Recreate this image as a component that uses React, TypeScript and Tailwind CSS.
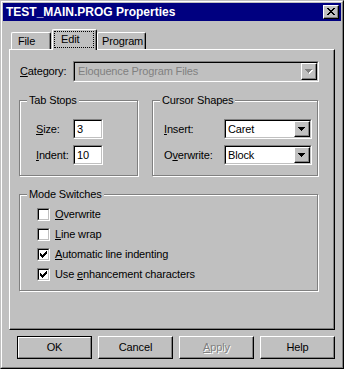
import React from "react";

const raised =
  "border-t border-l border-t-white border-l-white border-b border-r border-b-black border-r-black shadow-[inset_-1px_-1px_0_#808080]";

function Arrow({ disabled }: { disabled?: boolean }) {
  const fill = disabled ? "#808080" : "#000";
  return (
    <svg width="8" height="5" shapeRendering="crispEdges">
      {disabled && (
        <g fill="#fff">
          <rect x="1" y="1" width="7" height="1" />
          <rect x="2" y="2" width="5" height="1" />
          <rect x="3" y="3" width="3" height="1" />
          <rect x="4" y="4" width="1" height="1" />
        </g>
      )}
      <g fill={fill}>
        <rect x="0" y="0" width="7" height="1" />
        <rect x="1" y="1" width="5" height="1" />
        <rect x="2" y="2" width="3" height="1" />
        <rect x="3" y="3" width="1" height="1" />
      </g>
    </svg>
  );
}

function Sunken({ className, children, bg = "bg-white" }: { className: string; children?: React.ReactNode; bg?: string }) {
  return (
    <div className={`${className} border border-t-[#808080] border-l-[#808080] border-b-white border-r-white`}>
      <div className={`w-full h-full border border-t-black border-l-black border-b-[#c0c0c0] border-r-[#c0c0c0] ${bg} flex items-center`}>
        {children}
      </div>
    </div>
  );
}

function Combo({ className, value, disabled }: { className: string; value: string; disabled?: boolean }) {
  return (
    <Sunken className={className} bg={disabled ? "bg-[#c0c0c0]" : "bg-white"}>
      <span className={`flex-1 ${disabled ? "pl-[3px] text-[#808080]" : "pl-[2px]"}`}>{value}</span>
      <div className={`w-[16px] h-full bg-[#c0c0c0] flex items-center justify-center ${raised}`}>
        <Arrow disabled={disabled} />
      </div>
    </Sunken>
  );
}

function Check() {
  return (
    <svg width="7" height="7" shapeRendering="crispEdges" fill="#000">
      <rect x="6" y="0" width="1" height="1" />
      <rect x="5" y="1" width="2" height="1" />
      <rect x="0" y="2" width="1" height="1" />
      <rect x="4" y="2" width="3" height="1" />
      <rect x="0" y="3" width="2" height="1" />
      <rect x="3" y="3" width="3" height="1" />
      <rect x="0" y="4" width="5" height="1" />
      <rect x="1" y="5" width="3" height="1" />
      <rect x="2" y="6" width="1" height="1" />
    </svg>
  );
}

function CheckRow({ checked, children }: { checked?: boolean; children: React.ReactNode }) {
  return (
    <div className="h-[13px] flex items-center gap-[5px]">
      <div className="w-[13px] h-[13px] border border-t-[#808080] border-l-[#808080] border-b-white border-r-white">
        <div className="w-full h-full border border-t-black border-l-black border-b-[#c0c0c0] border-r-[#c0c0c0] bg-white pl-px pt-px">
          {checked && <Check />}
        </div>
      </div>
      <span>{children}</span>
    </div>
  );
}

function Group({ className, title, children }: { className: string; title: string; children?: React.ReactNode }) {
  return (
    <div className={`${className} relative border border-[#808080] shadow-[inset_1px_1px_0_#fff,1px_1px_0_#fff]`}>
      <span className="absolute top-[-7px] left-[7px] px-[2px] bg-[#c0c0c0]">{title}</span>
      {children}
    </div>
  );
}

function Button({ children, def, disabled }: { children: React.ReactNode; def?: boolean; disabled?: boolean }) {
  if (def) {
    return (
      <div className="w-[75px] h-[23px] border border-black">
        <div className="w-full h-full border-t border-l border-t-white border-l-white border-b border-r border-b-[#808080] border-r-[#808080] flex items-center justify-center">
          {children}
        </div>
      </div>
    );
  }
  return (
    <div className={`w-[75px] h-[23px] flex items-center justify-center ${raised} ${disabled ? "text-[#808080] [text-shadow:1px_1px_0_#fff]" : ""}`}>
      {children}
    </div>
  );
}

export default function App() {
  return (
    <div className="w-[344px] h-[369px] bg-[#c0c0c0] font-['Liberation_Sans',Arial,sans-serif] text-[11px] leading-[13px] tracking-[-0.15px] text-black border border-t-[#c0c0c0] border-l-[#c0c0c0] border-b-black border-r-black">
      <div className="h-full border border-t-white border-l-white border-b-[#808080] border-r-[#808080] p-px flex flex-col">
        {/* title bar */}
        <div className="h-[18px] bg-[#000080] flex items-center justify-between pl-[3px] pr-[2px]">
          <span className="text-white font-bold text-[12px] leading-[14px] tracking-normal">TEST_MAIN.PROG Properties</span>
          <div className={`w-[16px] h-[14px] bg-[#c0c0c0] pl-[3px] pt-[2px] ${raised}`}>
            <svg width="8" height="7" shapeRendering="crispEdges" fill="#000" className="block">
              <rect x="0" y="0" width="2" height="1" />
              <rect x="6" y="0" width="2" height="1" />
              <rect x="1" y="1" width="2" height="1" />
              <rect x="5" y="1" width="2" height="1" />
              <rect x="2" y="2" width="4" height="1" />
              <rect x="3" y="3" width="2" height="1" />
              <rect x="2" y="4" width="4" height="1" />
              <rect x="1" y="5" width="2" height="1" />
              <rect x="5" y="5" width="2" height="1" />
              <rect x="0" y="6" width="2" height="1" />
              <rect x="6" y="6" width="2" height="1" />
            </svg>
          </div>
        </div>

        {/* tabs */}
        <div className="mt-[8px] ml-[6px] pl-[2px] flex items-end h-[20px]">
          <div className="w-[40px] h-[17px] pl-[6px] pt-[2px] border-t border-l border-white border-r border-r-black rounded-tl-[2px] rounded-tr-[2px] shadow-[inset_-1px_0_0_#808080]">
            File
          </div>
          <div className="relative z-10 ml-[1px] mb-[-1px] w-[45px] h-[21px] bg-[#c0c0c0] border-t border-l border-white border-r border-r-black rounded-tl-[2px] rounded-tr-[2px] shadow-[inset_-1px_0_0_#808080]">
            <div className="ml-[1px] mt-[1px] w-[40px] h-[17px] border border-dotted border-black pl-[6px] pt-[1px]">Edit</div>
          </div>
          <div className="w-[49px] h-[17px] pl-[4px] pt-[2px] border-t border-l border-white border-r border-r-black rounded-tl-[2px] rounded-tr-[2px] shadow-[inset_-1px_0_0_#808080]">
            Program
          </div>
        </div>

        {/* panel */}
        <div className="ml-[6px] w-[326px] h-[281px] border-t border-l border-white border-b border-r border-b-black border-r-black shadow-[inset_-1px_-1px_0_#808080] pl-[9px] pt-[11px]">
          <div className="flex items-center h-[21px]">
            <span className="w-[54px] pl-[1px]">
              <u className="decoration-1">C</u>ategory:
            </span>
            <Combo className="w-[246px] h-[21px]" value="Eloquence Program Files" disabled />
          </div>

          <div className="mt-[18px] flex gap-[14px]">
            <Group className="w-[119px] h-[76px]" title="Tab Stops">
              <div className="pt-[18px] pl-[16px] flex flex-col gap-[6px]">
                <div className="flex items-center">
                  <span className="w-[37px]">
                    <u className="decoration-1">S</u>ize:
                  </span>
                  <Sunken className="w-[30px] h-[20px]">
                    <span className="pl-[2px]">3</span>
                  </Sunken>
                </div>
                <div className="flex items-center">
                  <span className="w-[37px]">
                    <u className="decoration-1">I</u>ndent:
                  </span>
                  <Sunken className="w-[30px] h-[20px]">
                    <span className="pl-[2px]">10</span>
                  </Sunken>
                </div>
              </div>
            </Group>
            <Group className="w-[166px] h-[76px]" title="Cursor Shapes">
              <div className="pt-[18px] pl-[11px] flex flex-col gap-[6px]">
                <div className="flex items-center">
                  <span className="w-[60px]">
                    <u className="decoration-1">I</u>nsert:
                  </span>
                  <Combo className="w-[88px] h-[20px]" value="Caret" />
                </div>
                <div className="flex items-center">
                  <span className="w-[60px]">
                    O<u className="decoration-1">v</u>erwrite:
                  </span>
                  <Combo className="w-[88px] h-[20px]" value="Block" />
                </div>
              </div>
            </Group>
          </div>

          <Group className="mt-[18px] w-[299px] h-[97px]" title="Mode Switches">
            <div className="pt-[13px] pl-[17px] flex flex-col gap-[7px]">
              <CheckRow>
                <u className="decoration-1">O</u>verwrite
              </CheckRow>
              <CheckRow>
                <u className="decoration-1">L</u>ine wrap
              </CheckRow>
              <CheckRow checked>
                <u className="decoration-1">A</u>utomatic line indenting
              </CheckRow>
              <CheckRow checked>
                Use <u className="decoration-1">e</u>nhancement characters
              </CheckRow>
            </div>
          </Group>
        </div>

        {/* buttons */}
        <div className="mt-[6px] pr-[6px] flex justify-end gap-[6px]">
          <Button def>OK</Button>
          <Button>Cancel</Button>
          <Button disabled>
            <span>
              <u className="decoration-1">A</u>pply
            </span>
          </Button>
          <Button>Help</Button>
        </div>
      </div>
    </div>
  );
}
